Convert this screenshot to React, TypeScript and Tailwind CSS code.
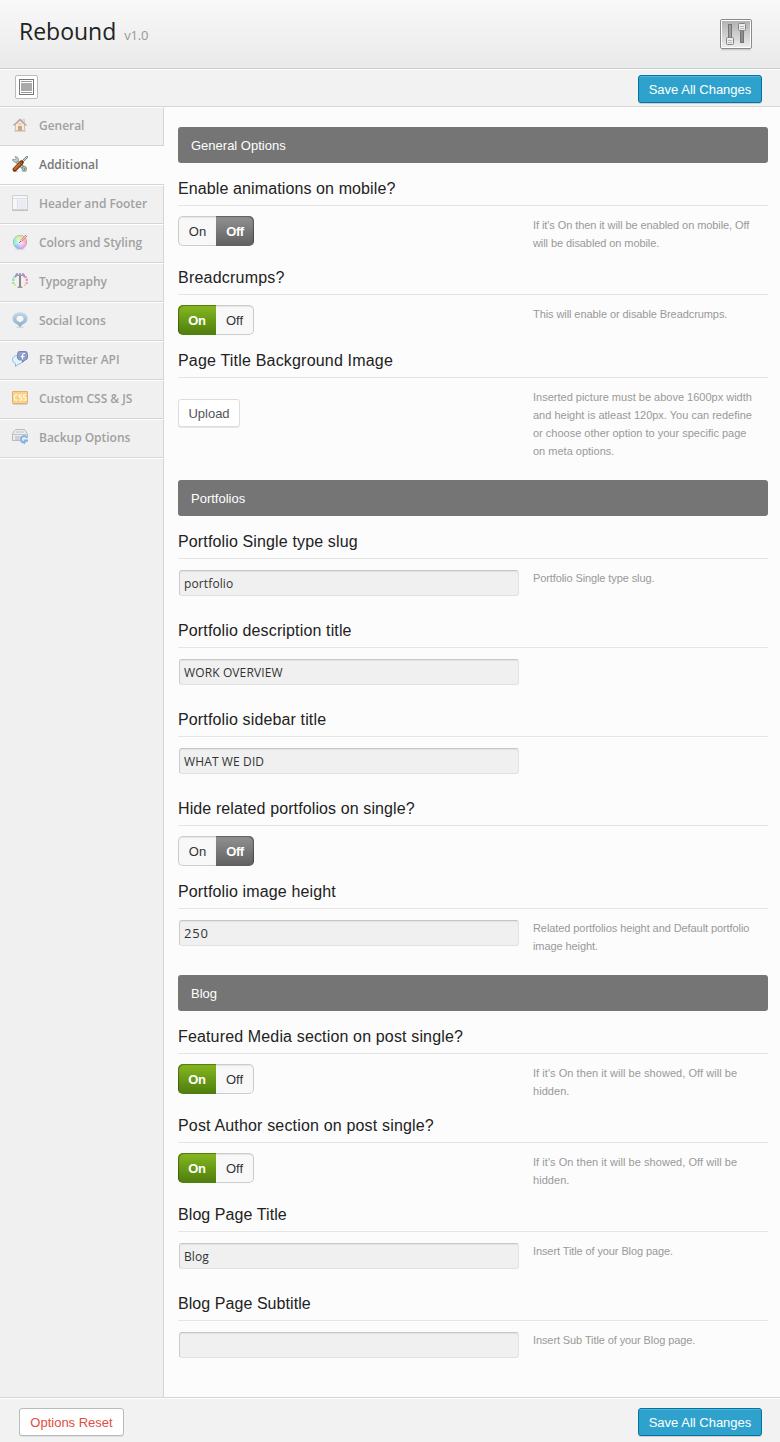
import type { ReactNode } from 'react';

const sans = "font-['Liberation_Sans',Arial,sans-serif]";
const open = "font-['Open_Sans',sans-serif]";

function SlidersIcon() {
  return (
    <svg width="32" height="32" viewBox="0 0 32 32">
      <defs>
        <linearGradient id="panel" x1="0" y1="0" x2="0" y2="1">
          <stop offset="0" stopColor="#b2b2b2" />
          <stop offset="0.6" stopColor="#d4d4d4" />
          <stop offset="1" stopColor="#ececec" />
        </linearGradient>
      </defs>
      <rect x="1" y="1.5" width="30" height="30" rx="1.5" fill="#000" opacity="0.12" />
      <rect x="0.5" y="0.5" width="31" height="29" rx="1.5" fill="#fff" stroke="#8a8a8a" />
      <rect x="2" y="2" width="28" height="26" fill="url(#panel)" />
      <rect x="8.5" y="5.5" width="3" height="13" fill="#a0a0a0" stroke="#747474" />
      <rect x="20.5" y="11.5" width="3" height="12" fill="#8c8c8c" stroke="#747474" />
      <rect x="6.5" y="18.5" width="7" height="7" rx="1" fill="#ececec" stroke="#828282" />
      <path d="M8 21.5h4M8 23.5h4" stroke="#bbb" />
      <rect x="18.5" y="4.5" width="7" height="7" rx="1" fill="#ececec" stroke="#828282" />
      <path d="M20 7.500h4M20 9.500h4" stroke="#bbb" />
    </svg>
  );
}

function HouseIcon() {
  return (
    <svg width="16" height="16" viewBox="0 0 16 16">
      <path d="M10.500 2.500h2v3h-2z" fill="#ece2d4" stroke="#cdbba8" strokeWidth="0.600" />
      <path d="M3.500 7.500L8 3.500l4.500 4V13.500h-9z" fill="#f8ead9" stroke="#c4b3a5" strokeWidth="0.800" />
      <path d="M1.500 8.500L8 2.500l6.500 6" fill="none" stroke="#b5a39f" strokeWidth="1.300" />
      <rect x="6.500" y="9.500" width="3" height="4" fill="#d6a681" stroke="#c4916d" strokeWidth="0.700" />
      <path d="M6.500 7h3" stroke="#d0b39b" />
      <path d="M2 14.200h12" stroke="#cbc6c1" />
    </svg>
  );
}

function ToolsIcon() {
  return (
    <svg width="16" height="16" viewBox="0 0 16 16">
      <path d="M1 15.500h5M10 15.500h5" stroke="#bbb" opacity=".7" />
      <path d="M4 4.500l8 8" stroke="#6d8080" strokeWidth="3.600" />
      <path d="M4 4.500l8 8" stroke="#c3d0cf" strokeWidth="1.800" />
      <path d="M3 .700C5.500.300 6.800 2.300 6.300 4.200 5.500 6.700 2.200 6.800.600 4.500L1 3l2 .900 1.200-1.200z" fill="#c3d0cf" stroke="#7b9090" strokeWidth=".8" />
      <circle cx="12.300" cy="12.700" r="2.300" fill="#b5c5c4" stroke="#6b7f7f" strokeWidth=".8" />
      <circle cx="12.500" cy="13" r=".8" fill="#566a6a" />
      <path d="M15 1l-5.500 5.500" stroke="#718989" strokeWidth="2.400" strokeLinecap="round" />
      <path d="M15 1l-5.500 5.500" stroke="#cbd9da" strokeWidth="1" strokeLinecap="round" />
      <path d="M9.500 6.500l-6.800 7" stroke="#6f2d08" strokeWidth="4.200" strokeLinecap="round" />
      <path d="M9 6.800l-6.200 6.400" stroke="#b9601d" strokeWidth="2.500" strokeLinecap="round" />
      <path d="M8.200 7l-5.500 5.600" stroke="#df9755" strokeWidth=".7" />
      <path d="M7.500 6.500l3 3" stroke="#5e4332" strokeWidth=".8" />
    </svg>
  );
}

function LayoutIcon() {
  return (
    <svg width="16" height="16" viewBox="0 0 16 16">
      <rect x=".5" y=".5" width="15" height="14" fill="#f5f7f9" stroke="#cdd2d7" />
      <path d="M1 3.500h14M5.500 3v12" stroke="#dbe0e6" />
      <rect x="6.500" y="4.500" width="8" height="9.500" fill="#e9edf2" />
      <path d="M0 15.500h16" stroke="#c2c2c2" />
    </svg>
  );
}

function ColorIcon() {
  return (
    <svg width="16" height="16" viewBox="0 0 16 16">
      <defs>
        <radialGradient id="shine">
          <stop offset="0" stopColor="#fff" stopOpacity=".85" />
          <stop offset="1" stopColor="#fff" stopOpacity=".1" />
        </radialGradient>
      </defs>
      <ellipse cx="8" cy="15" rx="5" ry=".8" fill="#bbb" opacity=".6" />
      <path d="M8 8V1A7 7 0 0 1 14 4.500z" fill="#ffc48e" />
      <path d="M8 8l6-3.500a7 7 0 0 1 0 7z" fill="#ff8fb0" />
      <path d="M8 8l6 3.500A7 7 0 0 1 8 15z" fill="#ed89f2" />
      <path d="M8 8v7a7 7 0 0 1-6-3.500z" fill="#76b5f5" />
      <path d="M8 8l-6 3.500a7 7 0 0 1 0-7z" fill="#74e6c4" />
      <path d="M8 8L2 4.500A7 7 0 0 1 8 1z" fill="#b4ec86" />
      <circle cx="8" cy="8" r="6.700" fill="url(#shine)" stroke="#a9b0bd" strokeWidth=".6" />
      <path d="M14.800 1.200L9 7" stroke="#b28b85" strokeWidth="2.200" />
      <path d="M15 1L9 7" stroke="#f3d9cf" strokeWidth="1" />
      <path d="M9 7l-2 2" stroke="#777" strokeWidth="1" />
    </svg>
  );
}

function TypeIcon() {
  return (
    <svg width="16" height="16" viewBox="0 0 16 16">
      <path d="M3 4.500V1.500h10v3h-1L11 3H9v10l1.500 1v1h-5v-1L7 13V3H5L4 4.500z" fill="#9d9d9d" />
      <path d="M8 3v11" stroke="#777" strokeWidth="1" />
      <path d="M4 1h2M7 1h2" stroke="#9b87df" strokeWidth="1.500" />
      <path d="M10 1h2" stroke="#b58ae0" strokeWidth="1.500" />
      <rect x="1" y="3" width="2" height="2" fill="#a9d4f0" />
      <rect x="0" y="5.500" width="2.500" height="2.500" rx=".6" fill="#8ce6b8" />
      <rect x="0" y="9" width="2.500" height="2" rx=".6" fill="#9be58b" />
      <rect x="2" y="11" width="2" height="2" fill="#cfeb93" />
      <rect x="13" y="3" width="2" height="2" fill="#dc9fe4" />
      <rect x="13.500" y="5.500" width="2.500" height="2.500" rx=".6" fill="#f091c7" />
      <rect x="13.500" y="9" width="2.500" height="2" rx=".6" fill="#f5a0a6" />
      <rect x="12" y="11" width="2" height="2" fill="#f8cba7" />
    </svg>
  );
}

function PinIcon() {
  return (
    <svg width="16" height="16" viewBox="0 0 16 16">
      <defs>
        <linearGradient id="pin" x1="0" y1="0" x2="0" y2="1">
          <stop stopColor="#c5dcef" />
          <stop offset="1" stopColor="#88acd0" />
        </linearGradient>
      </defs>
      <ellipse cx="8" cy="15.300" rx="4" ry=".7" fill="#bbb" opacity=".5" />
      <path d="M8 .3c4.300 0 7.500 2.600 7.500 6.300 0 3.200-2.300 5-5 6L8 15.200 5.500 12.600c-2.700-1-5-2.800-5-6C.5 2.900 3.700.3 8 .3z" fill="url(#pin)" />
      <path d="M8 3.200c2.600 0 4 1.300 4 3.300s-1 2.900-2.700 3.300L8 11l-1.300-1.200C5 9.400 4 8.500 4 6.500s1.400-3.300 4-3.300z" fill="#f7f7f7" stroke="#a5adb4" strokeWidth=".7" />
    </svg>
  );
}

function SocialIcon() {
  return (
    <svg width="16" height="16" viewBox="0 0 16 16">
      <path d="M5.500 4.500h3c2 1 2.500 3.500 2 5.500-.6 2.200-2.300 3-4 3.200L3.500 15.500v-3C1.500 11.500.5 10.300.5 8.500c0-2.500 2-4 5-4z" fill="#e4f2fb" stroke="#8db8de" />
      <path d="M7.500.5h5.500c1.800 0 2.500 1.200 2.500 3V6c0 2-1 3-2.500 3l-2.500 2.300V9H8.500C6.500 9 5.500 8 5.500 6V3.500c0-2 .7-3 2-3z" fill="#8f9fc7" stroke="#7486b2" />
      <path d="M13 2.500h-1c-1 0-1.500.5-1.500 1.500v4.500M9 5.500h3.500" fill="none" stroke="#fff" strokeWidth="1.200" />
    </svg>
  );
}

function CssIcon() {
  return (
    <svg width="16" height="16" viewBox="0 0 16 16">
      <rect x=".5" y="1.500" width="15" height="12" rx=".5" fill="#fbd183" stroke="#e3b07a" />
      <path d="M1 14.500h14" stroke="#d2d2d2" />
      <path d="M5.500 4.800H3.400L2.500 5.700v3.600l.9.900h2.100M9.700 4.800H7.900l-.7.600v1.200l.7.800h1.100l.7.800v1.200l-.7.800H7.100M14 4.800h-1.800l-.7.600v1.200l.7.800h1.100l.7.800v1.200l-.7.800h-1.900" fill="none" stroke="#fffbe9" strokeWidth="1.200" />
    </svg>
  );
}

function BackupIcon() {
  return (
    <svg width="16" height="16" viewBox="0 0 16 16">
      <path d="M2.500 1.500L3.500.5h9l3 4.500v6.500h-15v-6.500z" fill="#e9ebec" stroke="#b8bcc0" />
      <path d="M1 5.500h14M4 3h8" stroke="#c3c7cb" />
      <path d="M3 8h5M3 10h4" stroke="#b1b6ba" />
      <circle cx="12" cy="10.500" r="4" fill="#e9f0f5" />
      <path d="M15 9A3.200 3.200 0 1 0 12 13.500" fill="none" stroke="#86b2e0" strokeWidth="2" />
      <path d="M11.500 10.500h4.500v2l-2 .5-2 2.800z" fill="#86b2e0" />
    </svg>
  );
}

const navItems: { label: string; icon: ReactNode; active?: boolean }[] = [
  { label: 'General', icon: <HouseIcon /> },
  { label: 'Additional', icon: <ToolsIcon />, active: true },
  { label: 'Header and Footer', icon: <LayoutIcon /> },
  { label: 'Colors and Styling', icon: <ColorIcon /> },
  { label: 'Typography', icon: <TypeIcon /> },
  { label: 'Social Icons', icon: <PinIcon /> },
  { label: 'FB Twitter API', icon: <SocialIcon /> },
  { label: 'Custom CSS & JS', icon: <CssIcon /> },
  { label: 'Backup Options', icon: <BackupIcon /> },
];

function NavItem({ label, icon, active }: { label: string; icon: ReactNode; active?: boolean }) {
  return (
    <li
      className={`flex h-[39px] items-start gap-[11px] border-b border-b-[#d5d5d5] pl-3 text-[12px] font-semibold ${open} ${
        active
          ? 'bg-[#fcfcfc] pt-[9px] text-[#777]'
          : 'border-r border-t border-r-[#d5d5d5] border-t-white bg-[#f0f0f0] pt-2 text-[#a0a0a0]'
      }`}
    >
      <span className="shrink-0 pt-px">{icon}</span>
      <span className="whitespace-nowrap leading-5 tracking-[-0.03px]">{label}</span>
    </li>
  );
}

function SaveButton() {
  return (
    <button className={`h-7 w-[124px] whitespace-nowrap rounded-[3px] border border-[#0074a2] bg-[#2ea2cc] pt-[2px] text-[13px] text-white shadow-[inset_0_1px_0_rgba(120,200,230,0.5),0_1px_0_rgba(0,0,0,0.15)] ${sans}`}>
      Save All Changes
    </button>
  );
}

function Toggle({ on }: { on: boolean }) {
  return (
    <div className={`flex h-[30px] w-[76px] text-center text-[13px] ${sans}`}>
      <span
        className={
          on
            ? 'w-[38px] rounded-l-[5px] bg-linear-to-b from-[#87b91f] to-[#4d7d0d] font-bold leading-[31px] tracking-[-0.3px] text-white shadow-[inset_1px_1px_1px_rgba(0,0,0,0.35)]'
            : 'w-[38px] rounded-l-[5px] border border-r-0 border-[#ccc] bg-[#f8f8f8] leading-[30px] text-[#333] shadow-[inset_0_1px_1px_rgba(0,0,0,0.08)]'
        }
      >
        On
      </span>
      <span
        className={
          on
            ? 'w-[38px] rounded-r-[5px] border border-l-0 border-[#ccc] bg-[#f8f8f8] leading-[30px] text-[#333] shadow-[inset_0_1px_1px_rgba(0,0,0,0.08)]'
            : 'w-[38px] rounded-r-[5px] bg-linear-to-b from-[#929292] to-[#606060] font-bold leading-[32px] tracking-[-0.4px] text-white shadow-[inset_-1px_1px_1px_rgba(0,0,0,0.35)]'
        }
      >
        Off
      </span>
    </div>
  );
}

function Field({ value, wide }: { value: string; wide?: boolean }) {
  return (
    <input
      defaultValue={value}
      className={`ml-px block h-[26px] w-[340px] rounded-[3px] border border-[#e2e2e2] border-l-[#ccc] border-t-[#c6c6c6] bg-[#f0f0f0] px-1 text-[#333] shadow-[inset_0_1px_1px_rgba(0,0,0,0.05)] ${open} ${
        wide ? 'text-[13px] tracking-[0.8px]' : 'text-[12px] tracking-[0.12px]'
      }`}
    />
  );
}

function UploadButton() {
  return (
    <button className={`h-7 w-[62px] rounded-[3px] border border-[#ddd] bg-white pt-[2px] text-[13px] text-[#555] shadow-[0_1px_0_rgba(0,0,0,0.08)] ${sans}`}>
      Upload
    </button>
  );
}

type OptionText = { title: string; titleClass?: string; help?: string[]; helpClass?: string };

function Option({
  title,
  titleClass = 'tracking-[0.14px]',
  help,
  helpClass = 'tracking-[-0.08px]',
  children,
}: OptionText & { children: ReactNode }) {
  return (
    <section>
      <h3 className={`h-[43px] border-b border-[#e5e5e5] pt-[14px] text-[16px] leading-6 text-[#222] ${sans} ${titleClass}`}>{title}</h3>
      <div className="flex pt-[10px]">
        <div className="w-[355px] shrink-0">{children}</div>
        {help && (
          <p className={`whitespace-nowrap text-[11px] leading-[18px] text-[#999] ${sans} ${helpClass}`}>
            {help.map((line) => (
              <span key={line} className="block">{line}</span>
            ))}
          </p>
        )}
      </div>
    </section>
  );
}

function TextOption({ value, wide, ...text }: OptionText & { value: string; wide?: boolean }) {
  return (
    <Option {...text}>
      <div className="h-9 pt-px">
        <Field value={value} wide={wide} />
      </div>
    </Option>
  );
}

function Group({ title, children }: { title: string; children: ReactNode }) {
  return (
    <div className="mb-5">
      <h2 className={`h-9 rounded-[3px] bg-[#757575] pl-[13px] text-[13px] leading-[38px] text-white ${sans}`}>{title}</h2>
      {children}
    </div>
  );
}

export default function App() {
  return (
    <div className="flex h-[1442px] w-[780px] flex-col bg-[#fcfcfc]">
      <header className="flex h-[69px] shrink-0 items-start justify-between border-b border-[#ccc] bg-linear-to-b from-[#f9f9f9] to-[#e9e9e9] pl-[19px] pr-7">
        <h1 className={`flex items-baseline gap-2 pt-[15px] text-[23px] leading-8 text-[#222] ${open}`}>
          Rebound
          <span className="text-[13px] tracking-[-0.2px] text-[#999]">v1.0</span>
        </h1>
        <div className="pt-[19px]">
          <SlidersIcon />
        </div>
      </header>
      <div className="flex h-[38px] shrink-0 items-start justify-between border-b border-t border-b-[#d5d5d5] border-t-white bg-[#f2f2f2] pl-[15px] pr-[18px] pt-[5px]">
        <button className="flex h-6 w-[23px] items-center justify-center rounded-[2px] border border-[#bbb] bg-white">
          <svg width="15" height="16" viewBox="0 0 15 16">
            <rect x=".5" y=".5" width="14" height="15" fill="#fff" stroke="#777" />
            <rect x="2" y="4" width="11" height="8" fill="#aaa" />
            <path d="M2 2.500h11M2 13.500h11" stroke="#999" />
          </svg>
        </button>
        <SaveButton />
      </div>
      <div className="flex min-h-0 flex-1">
        <nav className="flex w-[164px] shrink-0 flex-col">
          <ul>
            {navItems.map((item) => (
              <NavItem key={item.label} {...item} />
            ))}
          </ul>
          <div className="flex-1 border-r border-t border-r-[#d5d5d5] border-t-white bg-[#f0f0f0]" />
        </nav>
        <main className="flex-1 pl-[14px] pr-3 pt-5">
          <Group title="General Options">
            <Option title="Enable animations on mobile?" titleClass="tracking-[0.11px]" help={["If it's On then it will be enabled on mobile, Off", 'will be disabled on mobile.']}>
              <Toggle on={false} />
            </Option>
            <Option title="Breadcrumps?" titleClass="tracking-[0.22px]" help={['This will enable or disable Breadcrumps.']}>
              <Toggle on />
            </Option>
            <Option
              title="Page Title Background Image"
              titleClass="tracking-[0.19px]"
              helpClass="tracking-[0px]"
              help={[
                'Inserted picture must be above 1600px width',
                'and height is atleast 120px. You can redefine',
                'or choose other option to your specific page',
                'on meta options.',
              ]}
            >
              <div className="flex pt-[11px]">
                <UploadButton />
              </div>
            </Option>
          </Group>
          <Group title="Portfolios">
            <TextOption title="Portfolio Single type slug" help={['Portfolio Single type slug.']} helpClass="tracking-[-0.1px]" value="portfolio" />
            <TextOption title="Portfolio description title" value="WORK OVERVIEW" />
            <TextOption title="Portfolio sidebar title" value="WHAT WE DID" />
            <Option title="Hide related portfolios on single?" titleClass="tracking-[0.11px]">
              <Toggle on={false} />
            </Option>
            <TextOption title="Portfolio image height" help={['Related portfolios height and Default portfolio', 'image height.']} value="250" wide />
          </Group>
          <Group title="Blog">
            <Option title="Featured Media section on post single?" titleClass="tracking-[0.15px]" helpClass="tracking-[0.05px]" help={["If it's On then it will be showed, Off will be", 'hidden.']}>
              <Toggle on />
            </Option>
            <Option title="Post Author section on post single?" titleClass="tracking-[0.17px]" helpClass="tracking-[0.05px]" help={["If it's On then it will be showed, Off will be", 'hidden.']}>
              <Toggle on />
            </Option>
            <TextOption title="Blog Page Title" titleClass="tracking-[0.08px]" help={['Insert Title of your Blog page.']} helpClass="tracking-[-0.1px]" value="Blog" />
            <TextOption title="Blog Page Subtitle" titleClass="tracking-[0.06px]" help={['Insert Sub Title of your Blog page.']} helpClass="tracking-[-0.1px]" value="" />
          </Group>
        </main>
      </div>
      <footer className="flex h-[45px] shrink-0 items-start justify-between border-t border-[#d5d5d5] bg-[#f2f2f2] pl-[19px] pr-[18px] pt-[10px] shadow-[inset_0_1px_0_white]">
        <button className={`h-7 w-[105px] rounded-[3px] border border-[#bbb] bg-white pt-[2px] text-[13px] text-[#e14d43] shadow-[0_1px_0_rgba(0,0,0,0.08)] ${sans}`}>
          Options Reset
        </button>
        <SaveButton />
      </footer>
    </div>
  );
}
